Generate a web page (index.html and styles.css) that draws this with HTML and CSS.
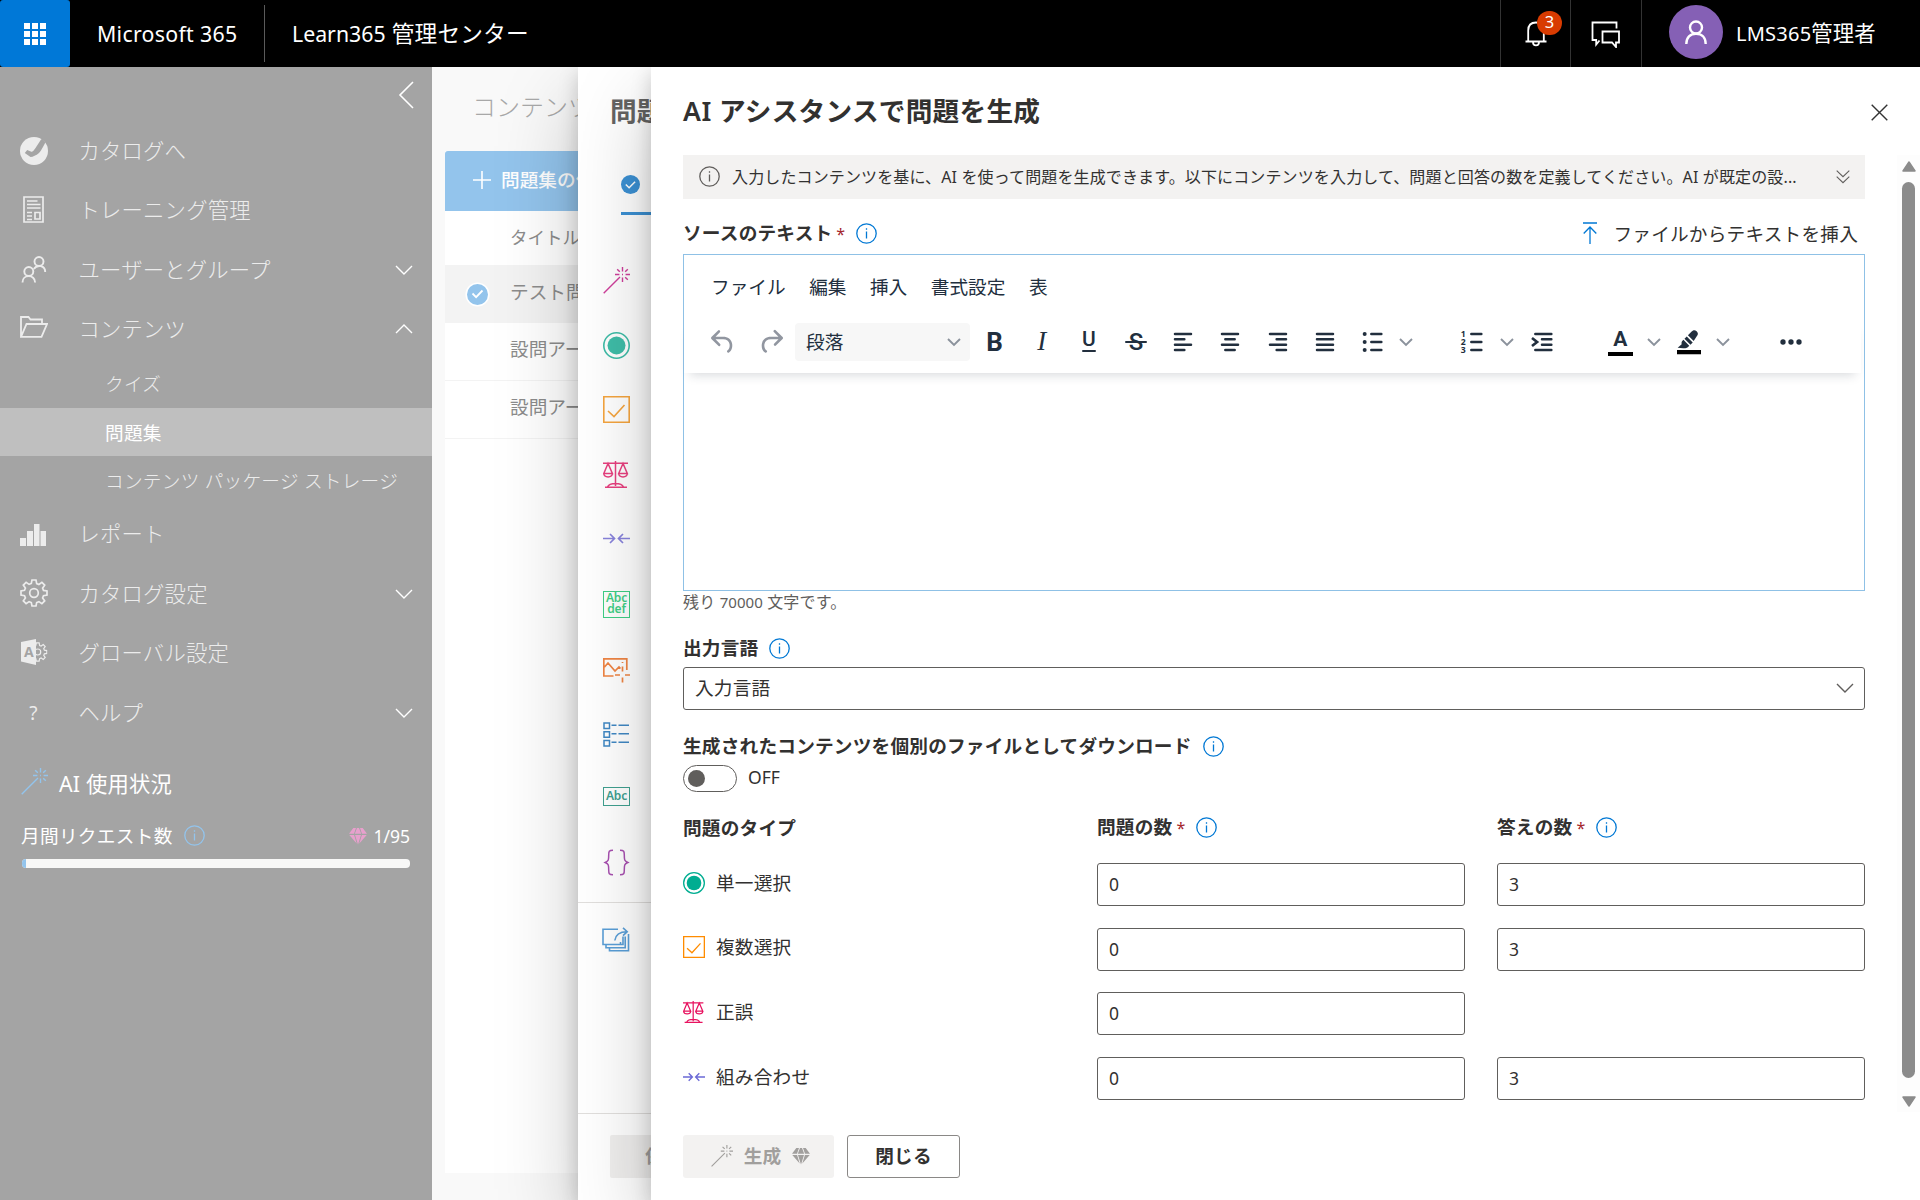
FILE: index.html
```html
<!DOCTYPE html>
<html lang="ja">
<head>
<meta charset="utf-8">
<title>Learn365 管理センター</title>
<link rel="stylesheet" href="styles.css">
</head>
<body>
<svg class="defs" aria-hidden="true">
  <symbol id="wand" viewBox="0 0 27 27"><path d="M.7 26.3 17 10M19.5 0v4.4M19.5 10.6V15M12 7.5h4.4M22.6 7.5H27M14.2 2.2l2.6 2.6M22.2 10.2l2.6 2.6M24.8 2.2l-2.6 2.6M19 7.5h1" fill="none" stroke="currentColor" stroke-width="1.4"/></symbol>
  <symbol id="radio" viewBox="0 0 27 27"><circle cx="13.5" cy="13.5" r="12.7" fill="none" stroke="currentColor" stroke-width="1.6"/><circle cx="13.5" cy="13.5" r="9" fill="currentColor"/></symbol>
  <symbol id="check" viewBox="0 0 27 27"><path d="M.8.8h25.4v25.4H.8zM5 15l6 5.500L21.500 9" fill="none" stroke="currentColor" stroke-width="1.6"/></symbol>
  <symbol id="scale" viewBox="0 0 27 27"><path d="M0 2.300h25M12.500 0v25M2 26.300h22M4.500 26c2-4.600 14-4.600 16 0M5 2.500.8 12.500h8.600zM20 2.500l-4.300 10h8.600zM.8 12.500c.3 4.500 8.300 4.500 8.600 0M15.700 12.500c.3 4.500 8.300 4.500 8.600 0" fill="none" stroke="currentColor" stroke-width="1.500"/></symbol>
  <symbol id="match" viewBox="0 0 27 27"><path d="M0 13.500h11.500M7 9l4.500 4.500L7 18M27 13.500H15.500M20 9l-4.500 4.500L20 18" fill="none" stroke="currentColor" stroke-width="1.700"/></symbol>
  <symbol id="info" viewBox="0 0 21 21"><circle cx="10.500" cy="10.500" r="9.700" fill="none" stroke="currentColor" stroke-width="1.300"/><path d="M10.500 8.500v7M10.500 5.200v1.600" stroke="currentColor" stroke-width="1.300"/></symbol>
  <symbol id="down" viewBox="0 0 18 18"><path d="m1 5 8 8 8-8" fill="none" stroke="currentColor" stroke-width="1.400"/></symbol>
  <symbol id="tdown" viewBox="0 0 14 14"><path d="m1 4 6 6 6-6" fill="none" stroke="currentColor" stroke-width="1.900"/></symbol>
  <symbol id="gem" viewBox="0 0 18 18"><path d="M4.300 1H7L5 6.700H0zM8 1h2l2.200 5.700H5.800zM11 1h2.700L18 6.700h-5zM.3 7.900h4.800l2.600 8.600zM6 7.900h6l-3 9.500zM12.900 7.900h4.800l-7.400 8.600z" fill="currentColor"/></symbol>
  <symbol id="gear" viewBox="0 0 28 28"><path d="M12 1h4l.7 3.600 2.200.9 3-2.100 2.800 2.800-2.100 3 .9 2.200L27 12v4l-3.500.7-.9 2.200 2.100 3-2.800 2.800-3-2.100-2.200.9L16 27h-4l-.7-3.500-2.200-.9-3 2.100-2.800-2.800 2.100-3-.9-2.200L1 16v-4l3.500-.7.9-2.200-2.100-3 2.800-2.800 3 2.100 2.200-.9z" fill="none" stroke="currentColor" stroke-width="1.700"/><circle cx="14" cy="14" r="4.300" fill="none" stroke="currentColor" stroke-width="1.700"/></symbol>
</svg>

<header class="top">
  <div class="waffle"><svg width="24" height="24" viewBox="0 0 24 24"><path fill="#fff" d="M1 1h6v6H1zM9 1h6v6H9zM17 1h6v6h-6zM1 9h6v6H1zM9 9h6v6H9zM17 9h6v6h-6zM1 17h6v6H1zM9 17h6v6H9zM17 17h6v6h-6z"/></svg></div>
  <div class="brand">Microsoft 365</div>
  <div class="appname"><span class="lat">Learn365</span> 管理センター</div>
  <div class="top-btn bell"><svg width="22" height="26" viewBox="0 0 22 26"><path d="M.500 20.500h21M3.200 20.500V9.500C3.200 4.500 6 1.500 11 1.500s7.800 3 7.800 8v11M8 21c0 4.600 6 4.600 6 0" fill="none" stroke="#fff" stroke-width="1.800"/></svg><span class="badge">3</span></div>
  <div class="top-btn"><svg width="30" height="28" viewBox="0 0 30 28"><path d="M8.500 20.500 5.200 24.500v-4.500H1.500V2.500h24v6M11.500 11.500h16.500v11h-3v4.500l-4-4.500h-9.500z" fill="none" stroke="#fff" stroke-width="1.800"/></svg></div>
  <div class="user"><span class="avatar"><svg width="22" height="24" viewBox="0 0 22 24"><circle cx="11" cy="7.500" r="6" fill="none" stroke="#fff" stroke-width="2.400"/><path d="M1.300 24c0-6.500 4-10.300 9.700-10.300s9.700 3.800 9.700 10.300" fill="none" stroke="#fff" stroke-width="2.400"/></svg></span><span><span class="lat">LMS365</span>管理者</span></div>
</header>

<div class="stage">
  <nav class="side">
    <div class="collapse"><svg width="16" height="28" viewBox="0 0 16 28"><path d="M15 1 2 14l13 13" fill="none" stroke="#fff" stroke-width="1.600"/></svg></div>
    <div class="item"><svg class="ic" viewBox="0 0 28 28"><circle cx="14" cy="14" r="14" fill="currentColor"/><path d="m4.800 16 2.400-3 4.200 1.800c1.800 0 3-1.800 9.600-12.300l1.500-.8 3 3.800c-1 1-3.500 7.500-6.500 10.500-3 2.500-6 3.800-8.500 4z" fill="#a4a4a4"/></svg><span>カタログへ</span></div>
    <div class="item"><svg class="ic" viewBox="0 0 28 28"><path d="M4 1h19v25H4zM7 5h10.500M7 8.500h13.500M7 12h13.500M7 16.500h5M7 20h5M7 23.500h5M15 16.500h5v6.500h-5z" fill="none" stroke="currentColor" stroke-width="1.700"/></svg><span>トレーニング管理</span></div>
    <div class="item"><svg class="ic" viewBox="0 0 28 28"><g fill="none" stroke="currentColor" stroke-width="1.900"><circle cx="19" cy="5.500" r="4.500"/><circle cx="8.800" cy="15.500" r="4.500"/><path d="M2.500 26.500c0-8.500 12.600-8.500 12.600 0M13.800 13c3.500-5 11.400-3.500 11.400 3"/></g></svg><span>ユーザーとグループ</span><svg class="chev"><use href="#down"/></svg></div>
    <div class="item"><svg class="ic" viewBox="0 0 28 28"><path d="M1 21.800V2h7.500l2 2.500H22V9M1 21.800 6.500 9H27l-5.500 12.800z" fill="none" stroke="currentColor" stroke-width="1.800"/></svg><span>コンテンツ</span><svg class="chev up"><use href="#down"/></svg></div>
    <div class="sub">クイズ</div>
    <div class="sub on">問題集</div>
    <div class="sub">コンテンツ パッケージ ストレージ</div>
    <div class="item"><svg class="ic" viewBox="0 0 28 28"><path d="M0 18h6v8H0zM7 11h6v15H7zM14 4h5.500v22H14zM20.500 11H26v15h-5.500z" fill="currentColor"/></svg><span>レポート</span></div>
    <div class="item"><svg class="ic gear"><use href="#gear"/></svg><span>カタログ設定</span><svg class="chev"><use href="#down"/></svg></div>
    <div class="item"><svg class="ic gear" viewBox="0 0 28 28"><use href="#gear" x="8" y="3.500" width="19.500" height="21"/><path d="M1 4 16 1v26L1 23.500z" fill="currentColor"/><text x="4" y="19" class="tile-a">A</text></svg><span>グローバル設定</span></div>
    <div class="item"><span class="ic q">?</span><span>ヘルプ</span><svg class="chev"><use href="#down"/></svg></div>
    <div class="ai-head"><svg><use href="#wand"/></svg><span>AI 使用状況</span></div>
    <div class="quota"><span>月間リクエスト数</span><svg class="info"><use href="#info"/></svg><span class="used"><svg class="gem"><use href="#gem"/></svg><span class="lat">1/95</span></span></div>
    <div class="bar"><div class="fill"></div></div>
  </nav>

  <main class="content">
    <h1>コンテンツ</h1>
    <div class="list">
      <div class="add"><svg width="20" height="20" viewBox="0 0 20 20"><path d="M10 1v18M1 10h18" stroke="#fff" stroke-width="1.600"/></svg>問題集の作成</div>
      <div class="row head">タイトル</div>
      <div class="row sel"><svg class="tick" width="25" height="25" viewBox="0 0 25 25"><circle cx="12.500" cy="12.500" r="11.300" fill="#93c4ec" stroke="#fff" stroke-width="1.600"/><path d="m7.500 11.500 3.600 3.600 6.400-6.600" fill="none" stroke="#fff" stroke-width="1.800"/></svg>テスト問題集</div>
      <div class="row">設問アーカイブ</div>
      <div class="row">設問アーカイブ</div>
    </div>
  </main>

  <section class="panel second">
    <h2>問題集</h2>
    <div class="tab"><svg width="19" height="19" viewBox="0 0 19 19"><circle cx="9.500" cy="9.500" r="9.500" fill="#3c91d4"/><path d="m4.800 9.500 3.300 3.300 6-6" fill="none" stroke="#fff" stroke-width="1.500"/></svg></div>
    <div class="rail">
      <div class="slot pink"><svg><use href="#wand"/></svg></div>
      <div class="slot teal"><svg><use href="#radio"/></svg></div>
      <div class="slot amber"><svg><use href="#check"/></svg></div>
      <div class="slot rose"><svg><use href="#scale"/></svg></div>
      <div class="slot violet"><svg><use href="#match"/></svg></div>
      <div class="slot green"><span class="abc tall">Abc<br>def</span></div>
      <div class="slot orange"><svg viewBox="0 0 27 27"><path d="M10.500 20H.8V2.800h23V14M1.500 11 5 7l7 8 4-4 1.500 1.500M19.500 6v1M19.500 10.500v5M19.500 21.500V26.500M12 19h5M22 19h5" fill="none" stroke="currentColor" stroke-width="1.700"/></svg></div>
      <div class="slot blue"><svg viewBox="0 0 27 27"><path d="M1 3h5.500v5.500H1zM1 11.700h5.500v5.500H1zM1 20.400h5.500v5.500H1zM8.500 5.200h5M15.500 5.200H26M8.500 13.700h5M15.500 13.700H26M8.500 22.200h5M15.500 22.200H26" fill="none" stroke="currentColor" stroke-width="1.500"/></svg></div>
      <div class="slot sea"><span class="abc">Abc</span></div>
      <div class="slot purple"><svg viewBox="0 0 27 27"><path d="M10 1.200c-4 0-4.300 1-4.300 4.800 0 5 0 6-3.500 7.500 3.500 1.500 3.500 2.500 3.500 7.500 0 3.800.3 4.800 4.300 4.800M17 1.200c4 0 4.300 1 4.300 4.800 0 5 0 6 3.500 7.500-3.500 1.500-3.500 2.500-3.500 7.500 0 3.800-.3 4.800-4.300 4.800" fill="none" stroke="currentColor" stroke-width="1.500"/></svg></div>
    </div>
    <div class="share"><svg viewBox="0 0 28 25"><path d="M16 2.200H1v15.300h17.500V15M21 9.500v8h-2.500M4 18v2.800h19.200V9.500M7.500 21v2.800h19V7M12.800 13.500C13.500 7.500 17.500 4.700 25 4.700M21 .8 25.200 4.700 21 8.600" fill="none" stroke="currentColor" stroke-width="1.600"/></svg></div>
    <div class="foot2"><div class="save">保存</div></div>
  </section>

  <section class="panel third">
    <div class="title-row"><h2><span class="lat">AI</span> アシスタンスで問題を生成</h2><svg class="close" width="17" height="17" viewBox="0 0 17 17"><path d="m.7.700 15.600 15.600M16.300.7.700 16.300" stroke="#333" stroke-width="1.400"/></svg></div>
    <div class="scroller">
      <div class="form">
        <div class="notice"><svg class="info"><use href="#info"/></svg><span class="msg">入力したコンテンツを基に、AI を使って問題を生成できます。以下にコンテンツを入力して、問題と回答の数を定義してください。AI が既定の設...</span><svg width="14" height="14" viewBox="0 0 14 14"><path d="m.7.700 6.300 6 6.300-6M.7 6.700l6.300 6 6.300-6" fill="none" stroke="#605e5c" stroke-width="1.100"/></svg></div>
        <div class="source"><span class="label">ソースのテキスト<i>*</i></span><svg class="info"><use href="#info"/></svg><span class="upload"><svg width="14" height="23" viewBox="0 0 14 23"><path d="M0 1h14M7 22V5M.7 11.500 7 5l6.300 6.500" fill="none" stroke="#0078d4" stroke-width="1.300"/></svg>ファイルからテキストを挿入</span></div>
        <div class="editor">
          <div class="menubar"><span>ファイル</span><span>編集</span><span>挿入</span><span>書式設定</span><span>表</span></div>
          <div class="toolbar">
            <svg class="t dim" viewBox="0 0 24 24"><path d="M6.400 8H12c3.700 0 6.200 2 6.800 5.100.6 2.700-.4 5.600-2.300 6.800a1 1 0 0 1-1-1.800c1.100-.6 1.800-2.700 1.400-4.600-.5-2.100-2.100-3.500-4.900-3.500H6.400l3.300 3.300a1 1 0 1 1-1.400 1.400l-5-5a1 1 0 0 1 0-1.400l5-5a1 1 0 0 1 1.400 1.400L6.400 8Z"/></svg>
            <svg class="t dim redo" viewBox="0 0 24 24"><path d="M17.600 10H12c-2.800 0-4.400 1.400-4.900 3.500-.4 2 .3 4 1.400 4.600a1 1 0 1 1-1 1.800c-2-1.200-2.900-4.100-2.300-6.800.6-3 3-5.100 6.800-5.100h5.600l-3.300-3.300a1 1 0 1 1 1.400-1.400l5 5a1 1 0 0 1 0 1.400l-5 5a1 1 0 0 1-1.400-1.400l3.300-3.300Z"/></svg>
            <div class="block">段落<svg class="tc"><use href="#tdown"/></svg></div>
            <span class="g bold">B</span>
            <span class="g ital">I</span>
            <span class="g und">U</span>
            <span class="g strike">S</span>
            <svg class="t g" viewBox="0 0 24 24"><path class="ln" d="M6 6h12M6 10h7M6 14h12M6 18h7"/></svg>
            <svg class="t g" viewBox="0 0 24 24"><path class="ln" d="M6 6h12M8.500 10h7M6 14h12M8.500 18h7"/></svg>
            <svg class="t g" viewBox="0 0 24 24"><path class="ln" d="M6 6h12M11 10h7M6 14h12M11 18h7"/></svg>
            <svg class="t g" viewBox="0 0 24 24"><path class="ln" d="M6 6h12M6 10h12M6 14h12M6 18h12"/></svg>
            <svg class="t g" viewBox="0 0 24 24"><path class="ln" d="M11.500 6h7.500M11.500 12h7.500M11.500 18h7.500"/><circle cx="6.500" cy="6" r="1.500"/><circle cx="6.500" cy="12" r="1.500"/><circle cx="6.500" cy="18" r="1.500"/></svg>
            <svg class="tc a"><use href="#tdown"/></svg>
            <svg class="t num" viewBox="0 0 24 24"><path class="ln" d="M11.500 6h7.500M11.500 12h7.500M11.500 18h7.500"/><text x="5.400" y="8.300">1</text><text x="5.400" y="14.300">2</text><text x="5.400" y="20.300">3</text></svg>
            <svg class="tc a"><use href="#tdown"/></svg>
            <svg class="t ind" viewBox="0 0 24 24"><path class="ln" d="M7 6h12M12 10h7M12 14h7M7 18h12"/><path d="m4.500 9 3.800 3-3.800 3" fill="none" stroke="#222f3e" stroke-width="2"/></svg>
            <span class="color">A</span>
            <svg class="tc b"><use href="#tdown"/></svg>
            <svg class="t hl" viewBox="0 0 24 24"><path d="M3 18h18v3.200H3z" fill="#000"/><path d="m7.700 16.600-4.200-.200 3-2.800c-.2-.9-.1-1.800.6-2.500l.7-.7 4.400 4.400-.9.900c-.8.700-2.600 1.200-3.600.900zM8.600 9.600l1.700-1.700 4.500 4.500-1.700 1.700zM11.200 7l2.800-2.800c1.500-1.500 2.600-1.200 3.700-.2 1.200 1.200 1.400 2.400 0 3.800l-2.200 3.500z"/></svg>
            <svg class="tc b"><use href="#tdown"/></svg>
            <svg class="t more" viewBox="0 0 24 24"><circle cx="6" cy="12" r="2"/><circle cx="12" cy="12" r="2"/><circle cx="18" cy="12" r="2"/></svg>
          </div>
          <div class="canvas"></div>
        </div>
        <div class="left">残り <span class="lat">70000</span> 文字です。</div>
        <div class="field lang"><span class="label">出力言語</span><svg class="info"><use href="#info"/></svg></div>
        <div class="select">入力言語<svg width="18" height="18"><use href="#down"/></svg></div>
        <div class="field dl"><span class="label">生成されたコンテンツを個別のファイルとしてダウンロード</span><svg class="info"><use href="#info"/></svg></div>
        <div class="switch"><span class="track"><span class="knob"></span></span><span class="lat">OFF</span></div>
        <div class="grid heads"><span class="label">問題のタイプ</span><span class="hd"><span class="label">問題の数<i>*</i></span><svg class="info"><use href="#info"/></svg></span><span class="hd"><span class="label">答えの数<i>*</i></span><svg class="info"><use href="#info"/></svg></span></div>
        <div class="grid line"><span class="type"><svg class="c-teal"><use href="#radio"/></svg>単一選択</span><span class="input">0</span><span class="input">3</span></div>
        <div class="grid line"><span class="type"><svg class="c-amber"><use href="#check"/></svg>複数選択</span><span class="input">0</span><span class="input">3</span></div>
        <div class="grid line"><span class="type"><svg class="c-rose"><use href="#scale"/></svg>正誤</span><span class="input">0</span></div>
        <div class="grid line"><span class="type"><svg class="c-violet"><use href="#match"/></svg>組み合わせ</span><span class="input">0</span><span class="input">3</span></div>
      </div>
      <div class="scrollbar"><svg width="14" height="11" viewBox="0 0 14 11"><path d="M7 1 13 10H1z" fill="#8b8b8b" stroke="#8b8b8b" stroke-width="1.500" stroke-linejoin="round"/></svg><div class="thumb"></div><svg width="14" height="11" viewBox="0 0 14 11"><path d="M1 1h12L7 10z" fill="#8b8b8b" stroke="#8b8b8b" stroke-width="1.500" stroke-linejoin="round"/></svg></div>
    </div>
    <div class="actions"><div class="btn off"><svg class="w"><use href="#wand"/></svg>生成<svg class="gem"><use href="#gem"/></svg></div><div class="btn">閉じる</div></div>
  </section>
</div>
</body>
</html>
```
FILE: styles.css
```css
* { box-sizing: border-box; }
body { margin: 0; width: 1920px; height: 1200px; overflow: hidden; display: flex; flex-direction: column; font-family: "Noto Sans", "Noto Sans CJK JP", sans-serif; font-size: 18.67px; line-height: 28px; letter-spacing: .2px; color: #323130; white-space: nowrap; }
svg { display: block; flex: none; }
h1, h2 { margin: 0; }
.defs { display: none; }
.lat { font-size: .94em; letter-spacing: 0; }

/* top bar */
.top { height: 67px; flex: none; background: #000; color: #fff; display: flex; align-items: center; }
.waffle { width: 70px; height: 67px; background: #0078d7; border-radius: 3px; display: grid; place-items: center; }
.brand { width: 195px; height: 57px; padding-left: 27px; border-right: 1px solid #5a5a5a; font-size: 21.3px; line-height: 57px; letter-spacing: .3px; }
.appname { padding-left: 27px; flex: 1; font-size: 22.67px; }
.top-btn { width: 70px; height: 67px; border-left: 1px solid #333; display: grid; place-items: center; position: relative; left: -1px; }
.badge { position: absolute; left: 36px; top: 11px; width: 25px; height: 24px; border-radius: 12px; background: #d83b01; font-size: 16.5px; line-height: 22px; text-align: center; }
.user { width: 279px; height: 67px; border-left: 1px solid #333; padding-left: 27px; display: flex; align-items: center; gap: 13px; font-size: 21.33px; }
.user .lat { letter-spacing: .2px; }
.avatar { width: 54px; height: 54px; margin-top: -3px; border-radius: 50%; background: #8560b5; display: grid; place-items: center; }

.stage { position: relative; flex: 1; display: flex; overflow: hidden; }

/* navigation */
.side { width: 432px; background: #a4a4a4; color: #ececec; font-weight: 300; font-size: 21.33px; }
.collapse { height: 54px; padding: 14px 18px 0 0; display: flex; justify-content: flex-end; }
.item { height: 59.5px; padding: 0 19px 0 20px; display: flex; align-items: center; }
.ic { width: 28px; height: 28px; margin-right: 30.500px; }
.gear { margin-top: -2px; }
.q { text-align: center; font-size: 19px; padding-right: 1px; font-weight: 400; }
.tile-a { font: bold 14px "Noto Sans", sans-serif; fill: #a4a4a4; }
.chev { width: 18px; height: 18px; margin-left: auto; color: #fff; }
.up { transform: rotate(180deg); }
.sub { height: 48.5px; padding-left: 105px; font-size: 18.67px; line-height: 49px; letter-spacing: .25px; }
.on { background: #bfbfbf; color: #fff; font-weight: 400; }
.ai-head { height: 34px; margin: 24px 0 0 21px; display: flex; align-items: center; gap: 11px; font-size: 21.33px; font-weight: 400; color: #fff; }
.ai-head svg { width: 27px; height: 27px; color: #93c4ec; margin-top: -5px; }
.quota { height: 28px; margin: 21px 22px 0 21px; display: flex; align-items: center; font-size: 18.67px; font-weight: 400; color: #fff; letter-spacing: .3px; }
.quota .info { margin-left: 11px; color: #93c4ec; }
.used { margin-left: auto; display: flex; align-items: center; gap: 6px; }
.used .gem { color: #e8a0cd; }
.info { width: 21px; height: 21px; }
.gem { width: 18px; height: 18px; }
.bar { height: 9px; margin: 9px 22px 0; border-radius: 4px; background: #f8f8f7; overflow: hidden; }
.fill { width: 4px; height: 9px; background: #93c4ec; }

/* question-set list */
.content { flex: 1; background: #f9f9f9; padding-left: 13px; }
.content h1 { height: 84px; padding: 22px 0 0 27px; font-size: 24px; line-height: 36px; font-weight: 300; letter-spacing: 0; color: #a8a8a8; }
.list { height: 1022px; background: #fff; color: #8c8c8c; letter-spacing: 0; }
.add { height: 60px; padding: 0 0 2px 27px; border-radius: 3px 0 0; background: #93c4ec; color: #fff; display: flex; align-items: center; gap: 9px; font-weight: 500; }
.row { height: 58.2px; padding-left: 65px; border-bottom: 1px solid #f3f3f3; line-height: 52px; }
.head { height: 54.5px; line-height: 52px; font-size: 17.5px; }
.sel { height: 57px; padding: 0 0 3px 20px; display: flex; align-items: center; gap: 20px; background: #f3f3f3; }
.tick { margin-top: 4px; }

/* stacked side panels */
.panel { position: absolute; top: 0; right: 0; bottom: 0; background: #fff; display: flex; flex-direction: column; box-shadow: 0 34px 77px rgba(0, 0, 0, .22), 0 6px 19px rgba(0, 0, 0, .18); }
.panel h2 { font-size: 26.67px; line-height: 40px; font-weight: 600; }
.second { left: 578px; }
.second h2 { width: 80px; overflow: hidden; padding: 24px 0 0 32px; color: #656463; }
.third h2 { letter-spacing: .25px; }
.third h2 .lat { font-size: 1em; letter-spacing: .5px; }
.tab { height: 44px; margin: 40px 0 0 43px; padding-top: 4px; border-bottom: 3px solid #3c91d4; }
.rail { margin-top: 33.500px; }
.slot { height: 64.5px; width: 27px; margin-left: 25px; display: flex; align-items: center; }
.slot svg { width: 27px; height: 27px; }
.abc { width: 27px; height: 19px; border: 1.5px solid; text-align: center; font: 600 12px/15px "Noto Sans", sans-serif; letter-spacing: -.2px; }
.tall { height: 27px; line-height: 11.500px; margin-top: 2px; }
.pink { color: #cf3f9b; } .teal { color: #3fbda8; } .amber { color: #f5a53f; } .rose { color: #e8407f; } .violet { color: #8883dc; }
.green { color: #3fcf86; } .orange { color: #f08544; padding-top: 3px; } .blue { color: #4088c4; padding-top: 3px; } .sea { color: #40a090; } .purple { color: #a850b0; padding-top: 2px; }
.share { height: 211px; margin-top: 8.500px; padding: 24px 0 0 24px; border-top: 1px solid #e1dfdd; color: #5a9fd8; }
.share svg { width: 28px; height: 25px; }
.foot2 { border-top: 1px solid #e1dfdd; padding: 21px 0 0 32px; }
.save { width: 108px; height: 43px; padding-left: 35px; background: #f0efee; color: #a19f9d; font-weight: 600; line-height: 41px; border-radius: 2px; }
.third { left: 651px; }
.title-row { height: 88px; padding: 24px 32px 0 32px; display: flex; justify-content: space-between; }
.close { margin-top: 13px; }
.scroller { height: 957px; padding-left: 32px; display: flex; justify-content: space-between; }
.form { width: 1182px; }
.scrollbar { width: 23px; padding: 6px 0 5px; background: #fdfdfd; display: flex; flex-direction: column; align-items: center; }
.thumb { width: 13px; height: 897px; margin: 10px 0 18px; border-radius: 7px; background: #8b8b8b; }
.notice { height: 44px; padding: 0 15px 0 16px; background: #f3f2f1; display: flex; align-items: center; font-size: 16px; letter-spacing: .13px; }
.notice .info { color: #605e5c; margin-top: -2px; }
.msg { margin-left: 12px; flex: 1; }
.label { font-weight: 600; }
.label i { margin-left: 4px; font-style: normal; font-weight: 400; font-size: 16px; color: #a4262c; }
.form .info { flex: none; }
.source .info, .field .info, .hd .info { color: #0078d4; margin-left: 11px; }
.source { height: 55px; padding: 14px 7px 0 0; display: flex; align-items: center; }
.upload { margin-left: auto; display: flex; align-items: center; gap: 16px; }
.editor { height: 337px; border: 1px solid #8fc1e6; color: #222f3e; letter-spacing: 0; }
.menubar { height: 64px; padding: 0 27px 1px; display: flex; align-items: center; gap: 23.5px; }
.toolbar { height: 54px; padding: 0 0 9px 23px; margin-right: 3px; display: flex; align-items: center; box-shadow: 0 8px 10px -6px rgba(34, 47, 62, .18); }
.t { width: 32px; height: 32px; fill: #222f3e; }
.dim { fill: #9196a0; }
.redo { margin-left: 16px; }
.ln { fill: none; stroke: #222f3e; stroke-width: 1.9; stroke-linecap: round; }
.num text { font: bold 6.500px "Noto Sans", sans-serif; text-anchor: middle; }
.block { width: 175px; height: 38px; margin: 0 8.500px 0 8px; padding: 0 9px 0 11px; border-radius: 4px; background: #f7f7f7; display: flex; justify-content: space-between; align-items: center; }
.tc { width: 14px; height: 14px; color: #8b929c; }
.g { width: 32px; margin-right: 15.200px; height: 32px; text-align: center; line-height: 32px; }
.bold { font: bold 26px/32px Roboto, sans-serif; }
.ital { font: italic 27px/31px "Liberation Serif", serif; }
.und { font: 500 21px/27px Roboto, sans-serif; position: relative; }
.und::after, .strike::after { content: ""; position: absolute; left: 9px; width: 14px; top: 24px; height: 2.500px; border-radius: 2px; background: #222f3e; }
.strike { font: 500 24px/32px Roboto, sans-serif; position: relative; }
.strike::after { left: 5px; width: 22px; top: 15px; }
.a { margin-left: -4px; }
.a + .num { margin-left: 43px; margin-right: 15.500px; }
.num + .a { margin-left: -4px; margin-right: 0; }
.a + .ind { margin-left: 12px; }
.color { width: 25px; height: 28px; margin: 1px 0 0 50px; border-bottom: 4px solid #000; text-align: center; font: bold 21px/23px Roboto, sans-serif; }
.b { margin-left: 14.500px; }
.hl { margin-left: 12px; }
.hl + .b { margin-left: 11px; }
.more { margin-left: 44.500px; }
.left { height: 24px; font-size: 16px; line-height: 22px; color: #605e5c; }
.field { height: 28px; display: flex; align-items: center; }
.lang { margin-top: 19px; }
.select { height: 43px; margin-top: 5px; padding: 0 10px 2px 11px; border: 1px solid #605e5c; border-radius: 3px; display: flex; justify-content: space-between; align-items: center; }
.select svg { color: #605e5c; }
.dl { margin-top: 22px; }
.switch { height: 28px; margin-top: 4px; display: flex; align-items: center; gap: 11px; }
.switch .lat { margin-top: -2px; }
.track { width: 54px; height: 27px; padding: 4px; border: 1px solid #605e5c; border-radius: 14px; }
.knob { display: block; width: 17px; height: 17px; border-radius: 50%; background: #605e5c; }
.grid { display: grid; grid-template-columns: 382px 368px 368px; column-gap: 32px; align-items: center; }
.heads { height: 28px; margin: 21px 0 22px; }
.hd { display: flex; align-items: center; }
.line { height: 43px; margin-bottom: 21.700px; }
.type { display: flex; align-items: center; gap: 11px; margin-top: -4px; }
.type svg { width: 22px; height: 22px; }
.c-teal { color: #00ad91; } .c-amber { color: #ff8c00; } .c-rose { color: #e8125f; } .c-violet { color: #6b69d6; }
.input { height: 43px; padding-left: 11px; border: 1px solid #605e5c; border-radius: 3px; line-height: 40px; font-size: 17.500px; }
.actions { margin-top: 23px; padding-left: 32px; display: flex; gap: 13px; }
.btn { width: 113px; height: 43px; border: 1px solid #8a8886; border-radius: 3px; display: flex; align-items: center; justify-content: center; font-weight: 600; padding-bottom: 2px; }
.off { width: 151px; border: 0; background: #f3f2f1; color: #a19f9d; gap: 11px; padding-left: 4px; }
.w { width: 22px; height: 22px; }
```
